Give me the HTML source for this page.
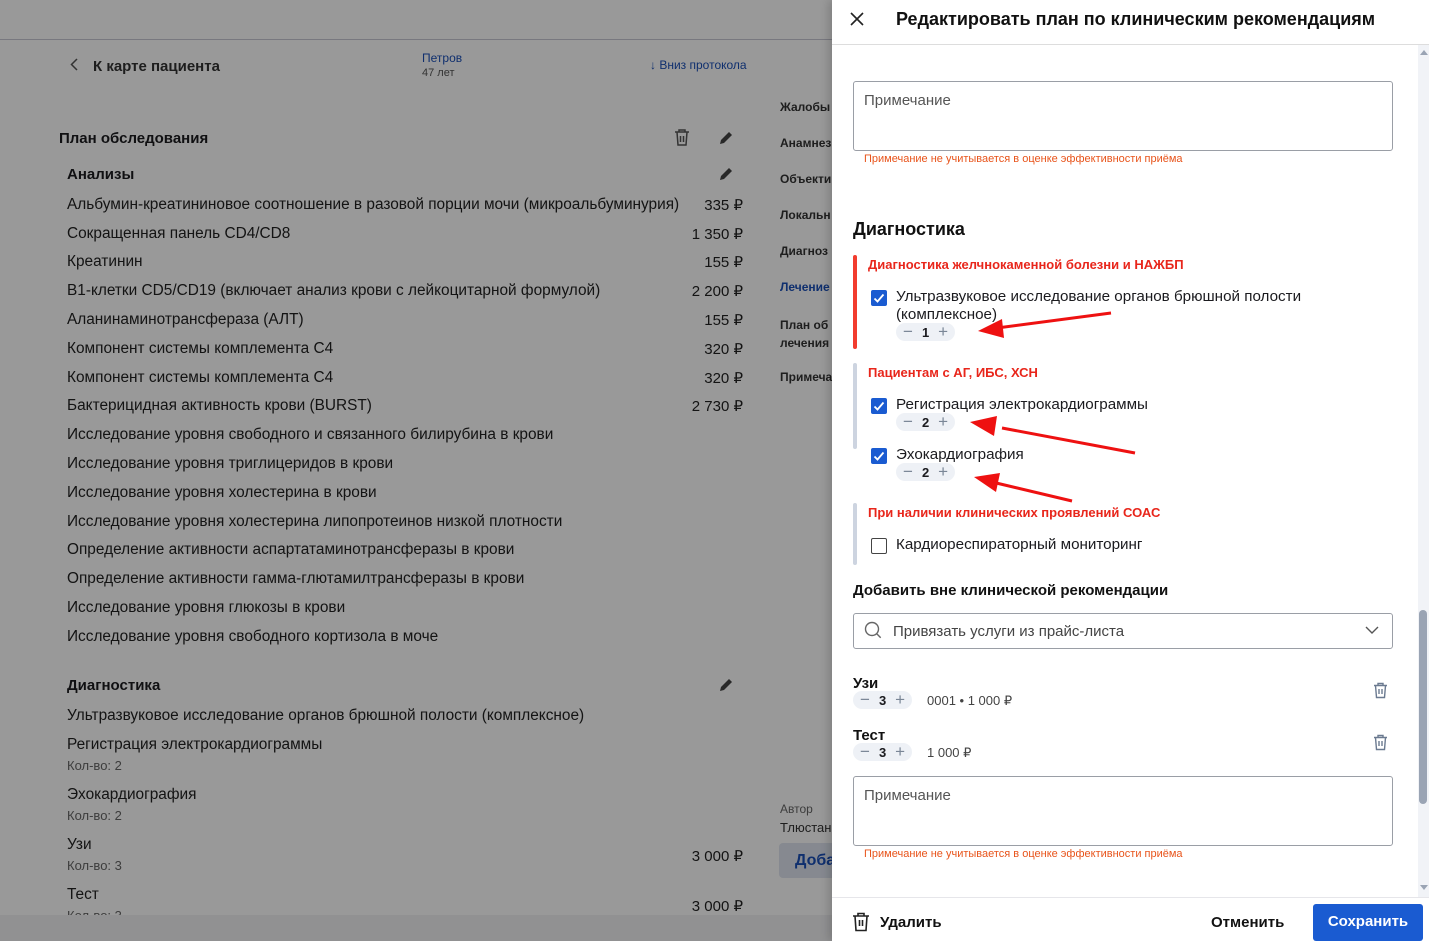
<!DOCTYPE html>
<html><head><meta charset="utf-8"><style>
*{box-sizing:border-box;margin:0;padding:0}
body{width:1429px;height:941px;overflow:hidden;position:relative;font-family:"Liberation Sans",sans-serif;background:#fff;color:#1b1b1f}
.a{position:absolute;white-space:nowrap}
.li{font-size:15.4px;color:#222}
.pr{font-size:15px;color:#222;right:686px}
.sub{font-size:13px;color:#666}
.ov{position:absolute;left:0;top:0;width:832px;height:941px;background:rgba(0,0,0,0.4)}
.panel{position:absolute;left:832px;top:0;width:597px;height:941px;background:#fff;box-shadow:-4px 0 8px rgba(0,0,0,.15)}
.ta{position:absolute;left:21px;width:540px;height:70px;border:1px solid #9a9ea6;border-radius:3px;font-size:15px;color:#555;padding:10px 10px}
.hint{position:absolute;left:32px;font-size:11px;color:#e8541b;white-space:nowrap}
.grp{position:absolute;left:21px;width:4px;border-radius:2px}
.gt{position:absolute;left:36px;font-size:13px;font-weight:bold;color:#e8261b;white-space:nowrap}
.cb{position:absolute;left:39px;width:16px;height:16px;border-radius:2px;background:#1a5bd1}
.cb svg{position:absolute;left:2px;top:2px}
.cbe{position:absolute;left:39px;width:16px;height:16px;border-radius:2px;border:1.5px solid #444}
.lbl{position:absolute;left:64px;font-size:15.2px;color:#1b1b1f;white-space:nowrap;line-height:18px}
.st{position:absolute;height:18px;border-radius:9px;background:#eef1f6;font-size:13px;font-weight:bold;color:#1b1b1f;display:flex;align-items:center;padding:0 7px;gap:9px}
.st span.m,.st span.p{color:#7a8696;font-weight:normal;font-size:17px;line-height:18px}
</style></head><body>
<div class="a" style="left:0;top:39px;width:832px;height:1px;background:#c8c8d4"></div>
<svg class="a" style="left:70px;top:58px" width="8" height="13" viewBox="0 0 8 13" fill="none" stroke="#555" stroke-width="1.5"><path d="M7 1L1.5 6.5 7 12"/></svg>
<div class="a" style="left:93px;top:58px;font-size:15px;font-weight:bold;color:#333">К карте пациента</div>
<div class="a" style="left:422px;top:51px;font-size:12px;color:#1a4fb8">Петров</div>
<div class="a" style="left:422px;top:67px;font-size:11px;color:#555">47 лет</div>
<div class="a" style="left:650px;top:58px;font-size:12px;color:#1a4fb8">&#8595; Вниз протокола</div>
<div class="a" style="left:780px;top:100px;font-size:12px;font-weight:bold;color:#333">Жалобы</div>
<div class="a" style="left:780px;top:136px;font-size:12px;font-weight:bold;color:#333">Анамнез</div>
<div class="a" style="left:780px;top:172px;font-size:12px;font-weight:bold;color:#333">Объекти</div>
<div class="a" style="left:780px;top:208px;font-size:12px;font-weight:bold;color:#333">Локальн</div>
<div class="a" style="left:780px;top:244px;font-size:12px;font-weight:bold;color:#333">Диагноз</div>
<div class="a" style="left:780px;top:280px;font-size:12px;font-weight:bold;color:#1a4fb8">Лечение</div>
<div class="a" style="left:780px;top:316px;font-size:12px;font-weight:bold;color:#333;line-height:18px">План об<br>лечения</div>
<div class="a" style="left:780px;top:370px;font-size:12px;font-weight:bold;color:#333">Примеча</div>
<div class="a" style="left:780px;top:802px;font-size:12px;color:#666">Автор</div>
<div class="a" style="left:780px;top:820px;font-size:13px;color:#333">Тлюстан</div>
<div class="a" style="left:779px;top:843px;width:60px;height:35px;background:#dfe5f0;border-radius:4px;font-size:16px;font-weight:bold;color:#1a4fb8;padding:9px 0 0 16px">Доба</div>
<div class="a" style="left:59px;top:130px;font-size:15px;font-weight:bold">План обследования</div>
<svg class="a" style="left:673px;top:128px" width="18" height="19" viewBox="0 0 18 19" fill="none" stroke="#555" stroke-width="1.5"><path d="M2 4h14M6 4V2h6v2M4 4l1 13h8l1-13M7.5 8v6M10.5 8v6"/></svg>
<svg class="a" style="left:717px;top:129px" width="18" height="18" viewBox="0 0 18 18"><path d="M3 15l1-4 8-8 3 3-8 8z" fill="#444"/></svg>
<div class="a" style="left:67px;top:166px;font-size:15px;font-weight:bold">Анализы</div>
<svg class="a" style="left:717px;top:165px" width="18" height="18" viewBox="0 0 18 18"><path d="M3 15l1-4 8-8 3 3-8 8z" fill="#444"/></svg>
<div class="a li" style="left:67px;top:196px">Альбумин-креатининовое соотношение в разовой порции мочи (микроальбуминурия)</div><div class="a pr" style="top:196px">335 ₽</div>
<div class="a li" style="left:67px;top:225px">Сокращенная панель CD4/CD8</div><div class="a pr" style="top:225px">1 350 ₽</div>
<div class="a li" style="left:67px;top:253px">Креатинин</div><div class="a pr" style="top:253px">155 ₽</div>
<div class="a li" style="left:67px;top:282px">B1-клетки CD5/CD19 (включает анализ крови с лейкоцитарной формулой)</div><div class="a pr" style="top:282px">2 200 ₽</div>
<div class="a li" style="left:67px;top:311px">Аланинаминотрансфераза (АЛТ)</div><div class="a pr" style="top:311px">155 ₽</div>
<div class="a li" style="left:67px;top:340px">Компонент системы комплемента С4</div><div class="a pr" style="top:340px">320 ₽</div>
<div class="a li" style="left:67px;top:369px">Компонент системы комплемента С4</div><div class="a pr" style="top:369px">320 ₽</div>
<div class="a li" style="left:67px;top:397px">Бактерицидная активность крови (BURST)</div><div class="a pr" style="top:397px">2 730 ₽</div>
<div class="a li" style="left:67px;top:426px">Исследование уровня свободного и связанного билирубина в крови</div>
<div class="a li" style="left:67px;top:455px">Исследование уровня триглицеридов в крови</div>
<div class="a li" style="left:67px;top:484px">Исследование уровня холестерина в крови</div>
<div class="a li" style="left:67px;top:513px">Исследование уровня холестерина липопротеинов низкой плотности</div>
<div class="a li" style="left:67px;top:541px">Определение активности аспартатаминотрансферазы в крови</div>
<div class="a li" style="left:67px;top:570px">Определение активности гамма-глютамилтрансферазы в крови</div>
<div class="a li" style="left:67px;top:599px">Исследование уровня глюкозы в крови</div>
<div class="a li" style="left:67px;top:628px">Исследование уровня свободного кортизола в моче</div>
<div class="a" style="left:67px;top:677px;font-size:15px;font-weight:bold">Диагностика</div>
<svg class="a" style="left:717px;top:676px" width="18" height="18" viewBox="0 0 18 18"><path d="M3 15l1-4 8-8 3 3-8 8z" fill="#444"/></svg>
<div class="a li" style="left:67px;top:707px">Ультразвуковое исследование органов брюшной полости (комплексное)</div>
<div class="a li" style="left:67px;top:736px">Регистрация электрокардиограммы</div>
<div class="a sub" style="left:67px;top:758px">Кол-во: 2</div>
<div class="a li" style="left:67px;top:786px">Эхокардиография</div>
<div class="a sub" style="left:67px;top:808px">Кол-во: 2</div>
<div class="a li" style="left:67px;top:836px">Узи</div>
<div class="a sub" style="left:67px;top:858px">Кол-во: 3</div>
<div class="a pr" style="top:847px">3 000 ₽</div>
<div class="a li" style="left:67px;top:886px">Тест</div>
<div class="a sub" style="left:67px;top:908px">Кол-во: 3</div>
<div class="a pr" style="top:897px">3 000 ₽</div>
<div class="a" style="left:0;top:915px;width:832px;height:26px;background:#f2f2f4"></div>
<div class="ov"></div>

<div class="panel">
 <svg class="a" style="left:18px;top:12px" width="14" height="14" viewBox="0 0 14 14" stroke="#222" stroke-width="1.6"><path d="M1 1l12 12M13 1L1 13"/></svg>
 <div class="a" style="left:64px;top:9px;font-size:18px;font-weight:bold;color:#111">Редактировать план по клиническим рекомендациям</div>
 <div class="a" style="left:0;top:44px;width:597px;height:1px;background:#ddd"></div>
 <div class="a" style="left:586px;top:45px;width:11px;height:852px;background:#f1f3f7"></div>
 <div class="a" style="left:588px;top:50px;border:4px solid transparent;border-bottom:5px solid #9aa4b4;border-top:0"></div>
 <div class="a" style="left:587px;top:610px;width:8px;height:194px;border-radius:4px;background:#9aa4b4"></div>
 <div class="a" style="left:588px;top:885px;border:4px solid transparent;border-top:5px solid #9aa4b4;border-bottom:0"></div>

 <div class="ta" style="top:81px">Примечание</div>
 <div class="hint" style="top:153px">Примечание не учитывается в оценке эффективности приёма</div>
 <div class="a" style="left:21px;top:219px;font-size:18px;font-weight:bold;color:#111">Диагностика</div>

 <div class="grp" style="top:255px;height:94px;background:#f23c2e"></div>
 <div class="gt" style="top:257px">Диагностика желчнокаменной болезни и НАЖБП</div>
 <div class="cb" style="top:290px"><svg width="12" height="12" viewBox="0 0 12 12" fill="none" stroke="#fff" stroke-width="1.8"><path d="M1.5 6.5l3 3 6-7"/></svg></div>
 <div class="lbl" style="top:288px">Ультразвуковое исследование органов брюшной полости<br>(комплексное)</div>
 <div class="st" style="left:64px;top:323px"><span class="m">−</span>1<span class="p">+</span></div>

 <div class="grp" style="top:363px;height:86px;background:#cdd4e0"></div>
 <div class="gt" style="top:365px">Пациентам с АГ, ИБС, ХСН</div>
 <div class="cb" style="top:398px"><svg width="12" height="12" viewBox="0 0 12 12" fill="none" stroke="#fff" stroke-width="1.8"><path d="M1.5 6.5l3 3 6-7"/></svg></div>
 <div class="lbl" style="top:396px">Регистрация электрокардиограммы</div>
 <div class="st" style="left:64px;top:413px"><span class="m">−</span>2<span class="p">+</span></div>
 <div class="cb" style="top:448px"><svg width="12" height="12" viewBox="0 0 12 12" fill="none" stroke="#fff" stroke-width="1.8"><path d="M1.5 6.5l3 3 6-7"/></svg></div>
 <div class="lbl" style="top:446px">Эхокардиография</div>
 <div class="st" style="left:64px;top:463px"><span class="m">−</span>2<span class="p">+</span></div>

 <div class="grp" style="top:503px;height:62px;background:#cdd4e0"></div>
 <div class="gt" style="top:505px">При наличии клинических проявлений СОАС</div>
 <div class="cbe" style="top:538px"></div>
 <div class="lbl" style="top:536px">Кардиореспираторный мониторинг</div>

 <svg class="a" style="left:0;top:0" width="597" height="941" viewBox="0 0 597 941">
  <g stroke="#ee1111" stroke-width="3" fill="#ee1111">
   <line x1="279" y1="313" x2="165" y2="328"/><path d="M146 331l24-12 2 19z" stroke="none"/>
   <line x1="303" y1="453" x2="170" y2="428"/><path d="M138 422l27-6-3 20z" stroke="none"/>
   <line x1="240" y1="501" x2="160" y2="482"/><path d="M142 477l26-4-4 19z" stroke="none"/>
  </g>
 </svg>

 <div class="a" style="left:21px;top:582px;font-size:15px;font-weight:bold;color:#111">Добавить вне клинической рекомендации</div>
 <div class="a" style="left:21px;top:613px;width:540px;height:36px;border:1px solid #9a9ea6;border-radius:3px"></div>
 <svg class="a" style="left:32px;top:621px" width="18" height="18" viewBox="0 0 18 18" fill="none" stroke="#666" stroke-width="1.4"><circle cx="8" cy="8" r="6.5"/><path d="M12.7 12.7l4 4"/></svg>
 <div class="a" style="left:61px;top:623px;font-size:15px;color:#444">Привязать услуги из прайс-листа</div>
 <svg class="a" style="left:533px;top:626px" width="14" height="9" viewBox="0 0 14 9" fill="none" stroke="#555" stroke-width="1.4"><path d="M1 1l6 6 6-6"/></svg>

 <div class="a" style="left:21px;top:675px;font-size:15px;font-weight:bold;color:#111">Узи</div>
 <div class="st" style="left:21px;top:691px"><span class="m">−</span>3<span class="p">+</span></div>
 <div class="a" style="left:95px;top:693px;font-size:13px;color:#444">0001 • 1 000 ₽</div>
 <svg class="a" style="left:541px;top:682px" width="15" height="17" viewBox="0 0 15 17" fill="none" stroke="#6b7a90" stroke-width="1.4"><path d="M1 3.5h13M5 3.5V1.5h5v2M2.5 3.5l1 12h8l1-12M6 7v5M9 7v5"/></svg>
 <div class="a" style="left:21px;top:727px;font-size:15px;font-weight:bold;color:#111">Тест</div>
 <div class="st" style="left:21px;top:743px"><span class="m">−</span>3<span class="p">+</span></div>
 <div class="a" style="left:95px;top:745px;font-size:13px;color:#444">1 000 ₽</div>
 <svg class="a" style="left:541px;top:734px" width="15" height="17" viewBox="0 0 15 17" fill="none" stroke="#6b7a90" stroke-width="1.4"><path d="M1 3.5h13M5 3.5V1.5h5v2M2.5 3.5l1 12h8l1-12M6 7v5M9 7v5"/></svg>

 <div class="ta" style="top:776px">Примечание</div>
 <div class="hint" style="top:848px">Примечание не учитывается в оценке эффективности приёма</div>

 <div class="a" style="left:0;top:897px;width:597px;height:1px;background:#e6e6ea"></div>
 <svg class="a" style="left:20px;top:912px" width="18" height="20" viewBox="0 0 18 20" fill="none" stroke="#222" stroke-width="1.6"><path d="M1 4h16M6 4V1.5h6V4M3 4l1 14.5h10L15 4M7.5 8v6M10.5 8v6"/></svg>
 <div class="a" style="left:48px;top:914px;font-size:15px;font-weight:bold;color:#111">Удалить</div>
 <div class="a" style="left:379px;top:914px;font-size:15px;font-weight:bold;color:#111">Отменить</div>
 <div class="a" style="left:481px;top:904px;width:110px;height:37px;background:#1a5bd1;border-radius:3px;color:#fff;font-size:15px;font-weight:bold;text-align:center;line-height:36px">Сохранить</div>
</div>
</body></html>
